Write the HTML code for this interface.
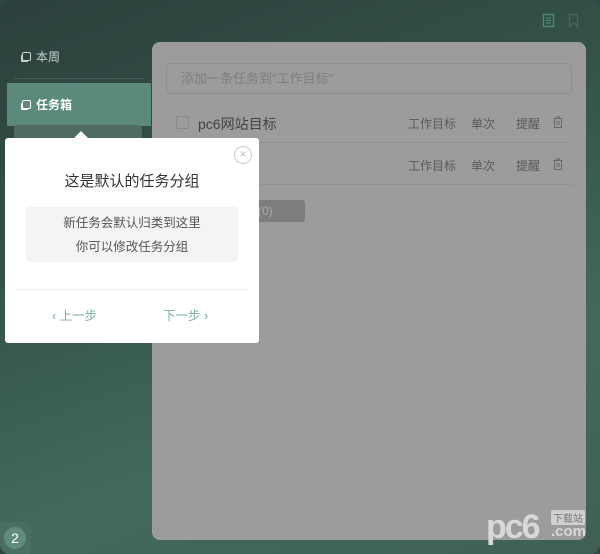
<!DOCTYPE html>
<html><head><meta charset="utf-8"><style>
*{margin:0;padding:0;box-sizing:border-box}
body{width:600px;height:554px;overflow:hidden;font-family:"Liberation Sans","Noto Sans CJK SC",sans-serif;background:#2f4742;position:relative}
.bg{position:absolute;inset:0;background:linear-gradient(160deg,#2c403c 0%,#34524a 35%,#416a5c 70%,#3f5f55 100%);border-radius:10px}
.panel{position:absolute;left:152px;top:42px;width:434px;height:498px;background:#9c9c9c;border-radius:8px}
.abs{position:absolute}
.nav{position:absolute;left:22px;color:#c9d3d0;font-size:12px;display:flex;align-items:center;gap:5px}
.ico{width:9px;height:9px;border:1.3px solid currentColor;border-radius:2px;box-shadow:-2px 2px 0 -1px currentColor}
.sel{position:absolute;left:7px;top:83px;width:144px;height:43px;background:#5b8a7c}
.input{position:absolute;left:166px;top:63px;width:406px;height:31px;border:1px solid #8e8e8e;border-radius:4px;color:#7f7f7f;font-size:13px;line-height:29px;padding-left:14px}
.row{position:absolute;left:166px;width:406px;height:42px;border-bottom:1px solid #929292;font-size:12px;color:#5a5a5a}
.row span{position:absolute;top:14px}
.row svg{position:absolute;left:387px;top:15px}
.pop{position:absolute;left:5px;top:138px;width:254px;height:205px;background:#fff;border-radius:3px}
</style></head><body>
<div class="bg"></div>
<svg class="abs" style="left:542px;top:13px" width="14" height="15"><rect x="1.5" y="1.5" width="10" height="12" fill="none" stroke="#4c8a76" stroke-width="1.4"/><path d="M4 5h5M4 7.5h5M4 10h5" stroke="#4c8a76" stroke-width="1.2"/></svg>
<svg class="abs" style="left:568px;top:13px" width="12" height="15"><path d="M1.5 1.5h8v12l-4-3.5-4 3.5z" fill="none" stroke="#4f5f5a" stroke-width="1.4"/></svg>
<div class="nav" style="top:48px"><i class="ico"></i>本周</div>
<div class="abs" style="left:14px;top:78px;width:130px;height:1px;background:#466159"></div>
<div class="sel"></div>
<div class="nav" style="top:96px;color:#fff;font-weight:bold"><i class="ico"></i>任务箱</div>
<div class="abs" style="left:14px;top:125px;width:128px;height:20px;background:#4f6b63;border-radius:4px"></div>
<div class="panel"></div>
<div class="input">添加一条任务到"工作目标"</div>
<div class="row" style="top:101px"><span style="left:10px;top:15px;width:13px;height:13px;border:1px solid #8a8a8a;border-radius:2px"></span><span style="left:32px;top:13px;font-size:14px;color:#444">pc6网站目标</span><span style="left:242px">工作目标</span><span style="left:305px">单次</span><span style="left:350px">提醒</span><svg width="10" height="12"><path d="M0.5 2.5h9M3.5 2.5V1h3v1.5M1.5 2.5v9h7v-9M4 5v4M6 5v4" fill="none" stroke="#6a6a6a"/></svg></div>
<div class="row" style="top:143px"><span style="left:242px">工作目标</span><span style="left:305px">单次</span><span style="left:350px">提醒</span><svg width="10" height="12"><path d="M0.5 2.5h9M3.5 2.5V1h3v1.5M1.5 2.5v9h7v-9M4 5v4M6 5v4" fill="none" stroke="#6a6a6a"/></svg></div>
<div class="abs" style="left:240px;top:200px;width:65px;height:22px;background:#7d7d7d;border-radius:3px;color:#aaa;font-size:12px;line-height:22px;padding-left:18px">(0)</div>
<div class="abs" style="left:74px;top:131px;width:0;height:0;border:7px solid transparent;border-bottom-color:#fff;border-top:0"></div>
<div class="pop">
<div class="abs" style="left:229px;top:8px;width:18px;height:18px;border:1.3px solid #ccc;border-radius:50%;color:#bbb;font-size:12px;line-height:15px;text-align:center">×</div>
<div class="abs" style="left:0;top:32px;width:254px;text-align:center;font-size:15px;color:#333">这是默认的任务分组</div>
<div class="abs" style="left:21px;top:69px;width:212px;height:55px;background:#f4f4f4;border-radius:3px;text-align:center;font-size:12.5px;color:#555;line-height:24px;padding-top:4px">新任务会默认归类到这里<br>你可以修改任务分组</div>
<div class="abs" style="left:11px;top:151px;width:232px;height:1px;background:#eee"></div>
<div class="abs" style="left:47px;top:167px;font-size:12.5px;color:#7bb09c">‹ 上一步</div>
<div class="abs" style="left:158px;top:167px;font-size:12.5px;color:#7bb09c">下一步 ›</div>
</div>
<div class="abs" style="left:0;top:522px;width:31px;height:32px;background:#4a6e62;border-radius:0 6px 0 10px"></div>
<div class="abs" style="left:4px;top:527px;width:22px;height:22px;background:#5f8c7d;border-radius:50%;color:#fff;font-size:14px;text-align:center;line-height:22px">2</div>
<div class="abs" style="left:486px;top:508px;font-size:34px;font-weight:bold;color:#d8d8d8;letter-spacing:-2px">pc6</div>
<div class="abs" style="left:551px;top:510px;background:#d0d0d0;color:#777;font-size:10px;padding:0 2px;border-radius:2px">下载站</div>
<div class="abs" style="left:551px;top:523px;color:#d8d8d8;font-size:15px;font-weight:bold">.com</div>
</body></html>
